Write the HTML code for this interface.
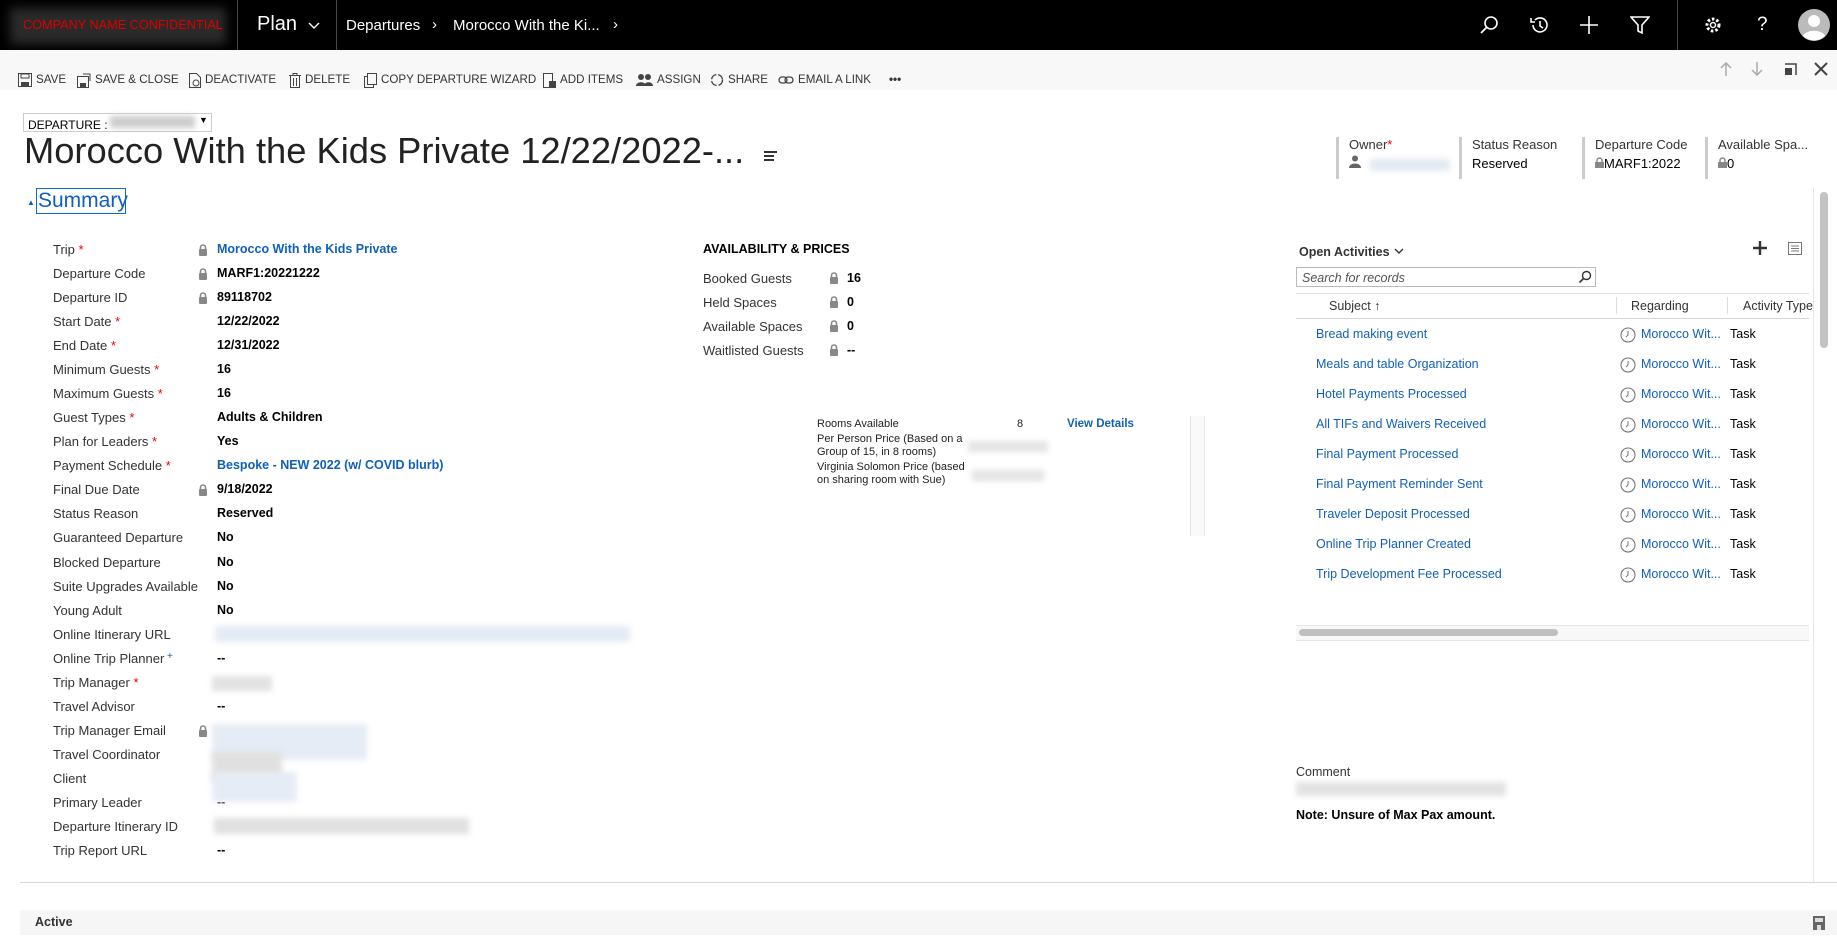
<!DOCTYPE html>
<html><head><meta charset="utf-8"><style>
*{box-sizing:border-box;margin:0;padding:0}
body{width:1837px;height:937px;position:relative;overflow:hidden;background:#fff;font-family:"Liberation Sans",Arial,sans-serif;color:#333}
.a{position:absolute;white-space:nowrap}
.top{position:absolute;left:0;top:0;width:1837px;height:50px;background:#000}
.cmd{position:absolute;left:0;top:50px;width:1837px;height:40px;background:#f8f8f8}
.ci{position:absolute;top:72px;height:16px;font-size:11.6px;line-height:16px;color:#333;display:flex;align-items:center;gap:4px}
.ci svg{display:block}
.lbl{font-size:13px;color:#333}
.val{font-size:12.5px;color:#000;font-weight:bold}
.lnk{color:#1160b7}
.req{color:#e00}
.blur{position:absolute;filter:blur(3px)}
.hd{position:absolute;top:137px;height:42px;border-left:3px solid #ccc;padding-left:10px;font-size:13px}
</style></head><body>
<div class="top"></div>
<div class="a" style="left:10px;top:8px;width:216px;height:36px;background:#2a2a2a;filter:blur(5px)"></div>
<div class="a" style="left:23px;top:18px;font-size:12.7px;color:#d00">COMPANY NAME CONFIDENTIAL</div>
<div class="a" style="left:237px;top:0;width:1px;height:50px;background:#444"></div>
<div class="a" style="left:257px;top:13px;font-size:20px;color:#fff">Plan</div>
<svg class="a" style="left:308px;top:22px" width="12" height="8"><path d="M1 1l5 5 5-5" stroke="#fff" fill="none" stroke-width="1.4"/></svg>
<div class="a" style="left:336px;top:0;width:1px;height:50px;background:#444"></div>
<div class="a" style="left:346px;top:17px;font-size:15px;color:#fff">Departures</div>
<div class="a" style="left:432px;top:16px;font-size:15px;color:#fff">›</div>
<div class="a" style="left:453px;top:17px;font-size:15px;color:#fff">Morocco With the Ki...</div>
<div class="a" style="left:613px;top:16px;font-size:15px;color:#fff">›</div>
<svg class="a" style="left:1479px;top:15px" width="20" height="20"><circle cx="12" cy="8" r="6" stroke="#fff" fill="none" stroke-width="1.6"/><path d="M8 12l-6 6" stroke="#fff" stroke-width="1.8"/></svg>
<svg class="a" style="left:1529px;top:15px" width="20" height="20"><path d="M4 10a7 7 0 1 0 2-5" stroke="#fff" fill="none" stroke-width="1.6"/><path d="M2 3v4h4" stroke="#fff" fill="none" stroke-width="1.6"/><path d="M11 6v5l3 2" stroke="#fff" fill="none" stroke-width="1.6"/></svg>
<svg class="a" style="left:1580px;top:16px" width="18" height="18"><path d="M9 0v18M0 9h18" stroke="#fff" stroke-width="1.6"/></svg>
<svg class="a" style="left:1630px;top:16px" width="20" height="18"><path d="M1 1h18l-7 8v8l-4-2V9z" stroke="#fff" fill="none" stroke-width="1.6"/></svg>
<div class="a" style="left:1677px;top:0;width:1px;height:50px;background:#444"></div>
<svg class="a" style="left:1704px;top:16px" width="18" height="18"><circle cx="9" cy="9" r="6" stroke="#fff" fill="none" stroke-width="3" stroke-dasharray="2.5 2"/><circle cx="9" cy="9" r="2.5" stroke="#fff" fill="none" stroke-width="1.5"/></svg>
<div class="a" style="left:1757px;top:14px;font-size:19px;color:#fff">?</div>
<svg class="a" style="left:1798px;top:9px" width="32" height="32"><circle cx="16" cy="16" r="16" fill="#bbb"/><circle cx="16" cy="12" r="6" fill="#fff"/><path d="M5 27c3-7 19-7 22 0a16 16 0 0 1-22 0z" fill="#fff"/></svg>

<div class="cmd"></div>
<div class="ci" style="left:18px"><svg width="14" height="14"><rect x=".5" y=".5" width="13" height="13" fill="none" stroke="#444"/><rect x="3" y="1" width="8" height="4" fill="none" stroke="#444"/><rect x="3" y="9" width="8" height="5" fill="#444"/></svg>SAVE</div>
<div class="ci" style="left:77px"><svg width="14" height="15"><rect x=".5" y="3.5" width="11" height="11" fill="none" stroke="#444"/><rect x="3" y="10" width="6" height="4" fill="#444"/><path d="M6 1h7v7" stroke="#444" fill="none"/></svg>SAVE &amp; CLOSE</div>
<div class="ci" style="left:189px"><svg width="12" height="15"><path d="M.5 .5h7l4 4v10h-11z" fill="none" stroke="#444"/><circle cx="7" cy="10" r="3" fill="none" stroke="#444"/></svg>DEACTIVATE</div>
<div class="ci" style="left:289px"><svg width="12" height="15"><path d="M0 2.5h12M4 2V.5h4V2M1.5 3v11.5h9V3M4.5 5v8M7.5 5v8" fill="none" stroke="#444"/></svg>DELETE</div>
<div class="ci" style="left:364px"><svg width="13" height="15"><path d="M3.5 .5h9v11h-9z" fill="none" stroke="#444"/><path d="M3 3.5H.5v11h9V12" fill="none" stroke="#444"/></svg>COPY DEPARTURE WIZARD</div>
<div class="ci" style="left:543px"><svg width="13" height="15"><path d="M.5 .5h9v14h-9z" fill="none" stroke="#444"/><rect x="6" y="8" width="7" height="7" fill="#444"/></svg>ADD ITEMS</div>
<div class="ci" style="left:636px"><svg width="17" height="14"><circle cx="5" cy="4" r="3" fill="#444"/><circle cx="12" cy="4" r="3" fill="#444"/><path d="M0 13c0-5 10-5 10 0zM8 13c0-5 9-5 9 0z" fill="#444"/></svg>ASSIGN</div>
<div class="ci" style="left:710px"><svg width="14" height="14"><circle cx="7" cy="7" r="5.5" fill="none" stroke="#444" stroke-width="1.4" stroke-dasharray="7 2"/></svg>SHARE</div>
<div class="ci" style="left:778px"><svg width="16" height="10"><rect x="1" y="2" width="8" height="6" rx="3" fill="none" stroke="#444" stroke-width="1.3"/><rect x="7" y="2" width="8" height="6" rx="3" fill="none" stroke="#444" stroke-width="1.3"/></svg>EMAIL A LINK</div>
<div class="ci" style="left:889px;font-weight:bold">•••</div>
<svg class="a" style="left:1720px;top:62px" width="12" height="14"><path d="M6 14V1M1 6l5-5 5 5" stroke="#aaa" fill="none" stroke-width="1.5"/></svg>
<svg class="a" style="left:1751px;top:62px" width="12" height="14"><path d="M6 0v13M1 8l5 5 5-5" stroke="#aaa" fill="none" stroke-width="1.5"/></svg>
<svg class="a" style="left:1784px;top:63px" width="13" height="13"><path d="M1 1h11v11" stroke="#444" fill="none" stroke-width="1.5"/><rect x="1" y="5" width="7" height="7" fill="#444"/></svg>
<svg class="a" style="left:1814px;top:62px" width="14" height="14"><path d="M1 1l12 12M13 1L1 13" stroke="#444" stroke-width="2"/></svg>

<div class="a" style="left:23px;top:113px;width:189px;height:19px;border:1px solid #ccc;font-size:12px;color:#000;padding:4px 0 0 4px">DEPARTURE :</div>
<div class="blur" style="left:110px;top:116px;width:85px;height:12px;background:#ccc"></div>
<div class="a" style="left:199px;top:115px;font-size:9px;color:#000">▼</div>
<div class="a" style="left:24px;top:130px;font-size:36.3px;color:#222">Morocco With the Kids Private 12/22/2022-...</div>
<div class="a" style="left:764px;top:151px;width:3px;height:2px;background:#333"></div>
<div class="a" style="left:767px;top:151px;width:10px;height:2px;background:#333;box-shadow:-3px 4px #333,-3px 8px #333"></div>

<div class="a" style="left:27px;top:198px;font-size:8px;color:#0f5fc0">▲</div>
<div class="a" style="left:36px;top:188px;height:26px;width:90px;border:1.5px solid #0f6cc9;font-size:21px;color:#0f5fc0;padding-left:1px;line-height:23px">Summary</div>

<div class="hd" style="left:1336px"><div>Owner<span class="req">*</span></div><div style="margin-top:3px;color:#666"><svg width="12" height="13"><circle cx="6" cy="3.5" r="3" fill="#666"/><path d="M0 13c0-6 12-6 12 0z" fill="#666"/></svg></div></div>
<div class="blur" style="left:1370px;top:159px;width:80px;height:12px;background:#e3e9f3"></div>
<div class="hd" style="left:1459px;color:#333"><div>Status Reason</div><div style="margin-top:4px;color:#000">Reserved</div></div>
<div class="hd" style="left:1582px"><div>Departure Code</div><div style="margin-top:4px;color:#000"><svg width="9" height="11"><path d="M2 5V3.5a2.5 2.5 0 0 1 5 0V5" stroke="#888" fill="none" stroke-width="1.5"/><rect x="0" y="5" width="9" height="6" fill="#888"/></svg>MARF1:2022</div></div>
<div class="hd" style="left:1705px"><div>Available Spa...</div><div style="margin-top:4px;color:#000"><svg width="9" height="11"><path d="M2 5V3.5a2.5 2.5 0 0 1 5 0V5" stroke="#888" fill="none" stroke-width="1.5"/><rect x="0" y="5" width="9" height="6" fill="#888"/></svg>0</div></div>

<div class="a" style="left:1813px;top:188px;width:1px;height:694px;background:#e6e6e6"></div>
<div class="a" style="left:1820px;top:192px;width:8px;height:156px;border-radius:4px;background:#c3c3c3"></div>

<div id="lf"></div>
<script>
var rows=[["Trip",1,1,"Morocco With the Kids Private","lnk"],["Departure Code",0,1,"MARF1:20221222"],["Departure ID",0,1,"89118702"],["Start Date",1,0,"12/22/2022"],["End Date",1,0,"12/31/2022"],["Minimum Guests",1,0,"16"],["Maximum Guests",1,0,"16"],["Guest Types",1,0,"Adults & Children"],["Plan for Leaders",1,0,"Yes"],["Payment Schedule",1,0,"Bespoke - NEW 2022 (w/ COVID blurb)","lnk"],["Final Due Date",0,1,"9/18/2022"],["Status Reason",0,0,"Reserved"],["Guaranteed Departure",0,0,"No"],["Blocked Departure",0,0,"No"],["Suite Upgrades Available",0,0,"No"],["Young Adult",0,0,"No"],["Online Itinerary URL",0,0,""],["Online Trip Planner",2,0,"--"],["Trip Manager",1,0,""],["Travel Advisor",0,0,"--"],["Trip Manager Email",0,1,""],["Travel Coordinator",0,0,""],["Client",0,0,""],["Primary Leader",0,0,"--"],["Departure Itinerary ID",0,0,""],["Trip Report URL",0,0,"--"]];
var h="";
var lockSvg=function(x,y){return '<svg class="a" style="left:'+x+'px;top:'+y+'px" width="10" height="12"><path d="M2.5 5V3.5a2.5 2.5 0 0 1 5 0V5" stroke="#888" fill="none" stroke-width="1.6"/><rect x="1" y="5" width="8" height="7" rx="1" fill="#888"/></svg>'};
rows.forEach(function(r,i){var y=242+i*24.04;
h+='<div class="a lbl" style="left:53px;top:'+y+'px">'+r[0]+(r[1]==1?'<span class="req"> *</span>':r[1]==2?'<span style="color:#1160b7;font-size:10px;vertical-align:top"> +</span>':'')+'</div>';
if(r[2])h+=lockSvg(198,y+2);
if(r[3])h+='<div class="a val '+(r[4]||'')+'" style="left:217px;top:'+y+'px">'+r[3].replace('&','&amp;')+'</div>';});
document.getElementById('lf').outerHTML=h;
</script>
<div class="blur" style="left:215px;top:626px;width:415px;height:16px;background:#e4ebf5"></div>
<div class="blur" style="left:212px;top:676px;width:60px;height:15px;background:#e2e2e2"></div>
<div class="blur" style="left:212px;top:724px;width:155px;height:36px;background:#e6ecf5"></div>
<div class="blur" style="left:212px;top:752px;width:70px;height:30px;background:#e0e0e0"></div>
<div class="blur" style="left:212px;top:772px;width:85px;height:30px;background:#e6ecf5"></div>
<div class="blur" style="left:214px;top:818px;width:255px;height:16px;background:#e0e0e0"></div>

<div class="a" style="left:703px;top:242px;font-size:12.5px;font-weight:bold;color:#000">AVAILABILITY &amp; PRICES</div>
<div class="a lbl" style="left:703px;top:271px">Booked Guests</div>
<div class="a lbl" style="left:703px;top:295px">Held Spaces</div>
<div class="a lbl" style="left:703px;top:319px">Available Spaces</div>
<div class="a lbl" style="left:703px;top:343px">Waitlisted Guests</div>
<svg class="a" style="left:829px;top:272px" width="10" height="12"><path d="M2.5 5V3.5a2.5 2.5 0 0 1 5 0V5" stroke="#888" fill="none" stroke-width="1.6"/><rect x="1" y="5" width="8" height="7" rx="1" fill="#888"/></svg>
<svg class="a" style="left:829px;top:296px" width="10" height="12"><path d="M2.5 5V3.5a2.5 2.5 0 0 1 5 0V5" stroke="#888" fill="none" stroke-width="1.6"/><rect x="1" y="5" width="8" height="7" rx="1" fill="#888"/></svg>
<svg class="a" style="left:829px;top:320px" width="10" height="12"><path d="M2.5 5V3.5a2.5 2.5 0 0 1 5 0V5" stroke="#888" fill="none" stroke-width="1.6"/><rect x="1" y="5" width="8" height="7" rx="1" fill="#888"/></svg>
<svg class="a" style="left:829px;top:344px" width="10" height="12"><path d="M2.5 5V3.5a2.5 2.5 0 0 1 5 0V5" stroke="#888" fill="none" stroke-width="1.6"/><rect x="1" y="5" width="8" height="7" rx="1" fill="#888"/></svg>
<div class="a val" style="left:847px;top:271px">16</div>
<div class="a val" style="left:847px;top:295px">0</div>
<div class="a val" style="left:847px;top:319px">0</div>
<div class="a val" style="left:847px;top:343px">--</div>
<div class="a" style="left:817px;top:418px;font-size:11px;color:#222;line-height:13px">Rooms Available</div>
<div class="a" style="left:1017px;top:418px;font-size:11px;color:#222">8</div>
<div class="a" style="left:1067px;top:418px;font-size:11.5px;color:#1160b7;font-weight:bold">View Details</div>
<div class="a" style="left:817px;top:433px;font-size:11px;color:#222;line-height:13px">Per Person Price (Based on a<br>Group of 15, in 8 rooms)</div>
<div class="blur" style="left:968px;top:441px;width:80px;height:11px;background:#e4e4e4"></div>
<div class="a" style="left:817px;top:461px;font-size:11px;color:#222;line-height:13px">Virginia Solomon Price (based<br>on sharing room with Sue)</div>
<div class="blur" style="left:972px;top:470px;width:72px;height:11px;background:#e4e4e4"></div>
<div class="a" style="left:1190px;top:416px;width:15px;height:120px;border-left:1px solid #e4e4e4;border-right:1px solid #e4e4e4;background:#fafafa"></div>

<div class="a" style="left:1299px;top:245px;font-size:12.5px;font-weight:bold;color:#333">Open Activities</div>
<svg class="a" style="left:1394px;top:248px" width="10" height="8"><path d="M1 1l4 4 4-4" stroke="#333" fill="none" stroke-width="1.4"/></svg>
<svg class="a" style="left:1753px;top:241px" width="14" height="14"><path d="M7 0v14M0 7h14" stroke="#333" stroke-width="2.4"/></svg>
<svg class="a" style="left:1788px;top:242px" width="14" height="13"><rect x=".5" y=".5" width="13" height="12" stroke="#777" fill="none"/><path d="M3 4h8M3 6.5h8M3 9h8" stroke="#777"/></svg>
<div class="a" style="left:1296px;top:267px;width:300px;height:20px;border:1px solid #bbb;font-size:12.5px;font-style:italic;color:#555;padding:3px 0 0 5px">Search for records</div>
<svg class="a" style="left:1578px;top:270px" width="14" height="14"><circle cx="8.5" cy="5.5" r="4" stroke="#333" fill="none" stroke-width="1.4"/><path d="M5.5 8.5l-4 4" stroke="#333" stroke-width="1.6"/></svg>
<div class="a" style="left:1296px;top:293px;width:513px;height:1px;background:#e0e0e0"></div>
<div class="a" style="left:1296px;top:318px;width:513px;height:1px;background:#d6d6d6"></div>
<div class="a" style="left:1616px;top:297px;width:1px;height:17px;background:#ddd"></div>
<div class="a" style="left:1727px;top:297px;width:1px;height:17px;background:#ddd"></div>
<div class="a" style="left:1329px;top:299px;font-size:12.5px;color:#333">Subject ↑</div>
<div class="a" style="left:1631px;top:299px;font-size:12.5px;color:#333">Regarding</div>
<div class="a" style="left:1743px;top:299px;font-size:12.5px;color:#333">Activity Type</div>
<div id="acts"></div>
<script>
var s=["Bread making event","Meals and table Organization","Hotel Payments Processed","All TIFs and Waivers Received","Final Payment Processed","Final Payment Reminder Sent","Traveler Deposit Processed","Online Trip Planner Created","Trip Development Fee Processed"],h2="";
s.forEach(function(t,i){var y=327+i*30;
h2+='<div class="a lnk" style="left:1316px;top:'+y+'px;font-size:12.5px">'+t+'</div>';
h2+='<svg class="a" style="left:1620px;top:'+y+'px" width="16" height="16"><circle cx="8" cy="8" r="7" stroke="#777" fill="none" stroke-width="1.1"/><path d="M8 4v4l-2 2" stroke="#777" fill="none"/></svg>';
h2+='<div class="a lnk" style="left:1641px;top:'+y+'px;font-size:12.5px">Morocco Wit...</div>';
h2+='<div class="a" style="left:1730px;top:'+y+'px;font-size:12.5px;color:#000">Task</div>';});
document.getElementById('acts').outerHTML=h2;
</script>
<div class="a" style="left:1296px;top:625px;width:513px;height:16px;background:#f8f8f8;border-top:1px solid #e6e6e6;border-bottom:1px solid #e6e6e6"></div>
<div class="a" style="left:1299px;top:629px;width:259px;height:7px;border-radius:4px;background:#c0c0c0"></div>

<div class="a" style="left:1296px;top:765px;font-size:12.5px;color:#333">Comment</div>
<div class="blur" style="left:1296px;top:782px;width:210px;height:14px;background:#e2e2e2"></div>
<div class="a" style="left:1296px;top:808px;font-size:12.5px;font-weight:bold;color:#000">Note: Unsure of Max Pax amount.</div>

<div class="a" style="left:20px;top:882px;width:1817px;height:1px;background:#d6d6d6"></div>
<div class="a" style="left:20px;top:910px;width:1817px;height:25px;background:#f6f6f6"></div>
<div class="a" style="left:35px;top:915px;font-size:12.5px;font-weight:bold;color:#333">Active</div>
<svg class="a" style="left:1813px;top:916px" width="12" height="14"><rect x="0" y="0" width="12" height="14" fill="#666"/><rect x="2" y="2" width="8" height="4" fill="#ddd"/><rect x="4" y="9" width="4" height="5" fill="#ddd"/></svg>
</body></html>
